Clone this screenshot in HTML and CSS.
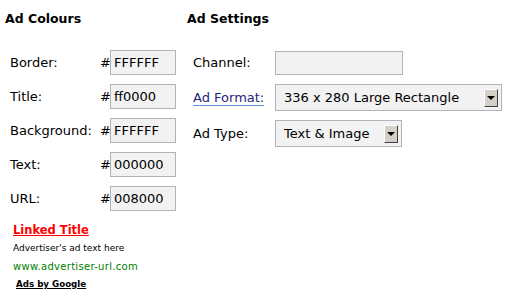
FILE: index.html
```html
<!DOCTYPE html>
<html lang="en">
<head>
    <meta charset="UTF-8">
    <title>Ad settings</title>
    <link rel="stylesheet" href="styles.css">
</head>
<body>
  <div class="page">
    <div class="colours">
        <h3>Ad Colours</h3>
        <div class="rows">
            <div class="row"><label>Border:</label><span class="hash">#</span><input type="text" value="FFFFFF"></div>
            <div class="row"><label>Title:</label><span class="hash">#</span><input type="text" value="ff0000"></div>
            <div class="row"><label>Background:</label><span class="hash">#</span><input type="text" value="FFFFFF"></div>
            <div class="row"><label>Text:</label><span class="hash">#</span><input type="text" value="000000"></div>
            <div class="row"><label>URL:</label><span class="hash">#</span><input type="text" value="008000"></div>
        </div>
        <div class="preview">
            <a class="ad-title" href="#">Linked Title</a>
            <p class="ad-text">Advertiser's ad text here</p>
            <p class="ad-url">www.advertiser-url.com</p>
            <a class="ad-google" href="#">Ads by Google</a>
        </div>
    </div>

    <div class="settings">
        <h3>Ad Settings</h3>
        <div class="rows">
            <div class="row"><label>Channel:</label><input type="text" class="channel"></div>
            <div class="row tall"><div class="label"><a class="link" href="#">Ad Format:</a></div>
                <div class="select wide"><span>336 x 280 Large Rectangle</span><span class="arrow"></span></div>
            </div>
            <div class="row tall"><label>Ad Type:</label>
                <div class="select"><span>Text &amp; Image</span><span class="arrow"></span></div>
            </div>
        </div>
    </div>
  </div>
</body>
</html>
```
FILE: styles.css
```css
*{
    margin: 0;
    padding: 0;
    box-sizing: border-box;
    font-family: "DejaVu Sans", Verdana, sans-serif;
}
body{
    background: #fff;
    color: #000;
    font-size: 13px;
}
.page{
    display: flex;
    padding: 11px 0 0 5px;
}
h3{
    font-size: 12.5px;
    font-weight: bold;
    height: 39px;
}
.colours{
    width: 182px;
}
.rows{
    display: flex;
    flex-direction: column;
    gap: 9px;
}
.row{
    display: flex;
    align-items: center;
    height: 25px;
}
.row.tall{
    height: 27px;
}
.colours .row{
    padding-left: 5px;
}
.colours label{
    width: 89px;
}
.hash{
    width: 10px;
    margin-left: 1px;
}
input{
    border: 1px solid #b3b3b3;
    background: #f2f2f2;
    height: 25px;
    width: 66px;
    font-size: 13px;
    padding-left: 3px;
    color: #000;
}
.settings .row{
    padding-left: 6px;
}
.settings label, .settings .label{
    width: 82px;
}
.link{
    color: #1f1f7a;
    text-decoration: none;
    border-bottom: 1px solid #5b8ad6;
    line-height: 15px;
}
.channel{
    width: 128px;
    height: 24px;
}
.select{
    display: flex;
    align-items: center;
    justify-content: space-between;
    border: 1px solid #b3b3b3;
    background: #f2f2f2;
    height: 27px;
    width: 127px;
    padding: 0 3px 0 8px;
}
.select.wide{
    width: 227px;
}
.arrow{
    width: 14px;
    height: 18px;
    background: #d4d0c8;
    border-top: 1px solid #fff;
    border-left: 1px solid #fff;
    border-right: 1px solid #404040;
    border-bottom: 1px solid #404040;
    display: flex;
    align-items: center;
    justify-content: center;
}
.arrow::after{
    content: "";
    border-left: 4px solid transparent;
    border-right: 4px solid transparent;
    border-top: 4px solid #000;
}
.preview{
    padding: 12px 0 0 8px;
}
.ad-title{
    display: block;
    color: #f00;
    font-weight: bold;
    font-size: 11.5px;
    text-decoration: underline;
    height: 15px;
}
.ad-text{
    font-size: 9px;
    height: 20px;
    line-height: 20px;
}
.ad-url{
    font-size: 10px;
    color: #008000;
    height: 17px;
    line-height: 17px;
    letter-spacing: 0.3px;
}
.ad-google{
    display: inline-block;
    margin-left: 3px;
    font-size: 8.7px;
    color: #000;
    font-weight: bold;
    text-decoration: underline;
}
```
